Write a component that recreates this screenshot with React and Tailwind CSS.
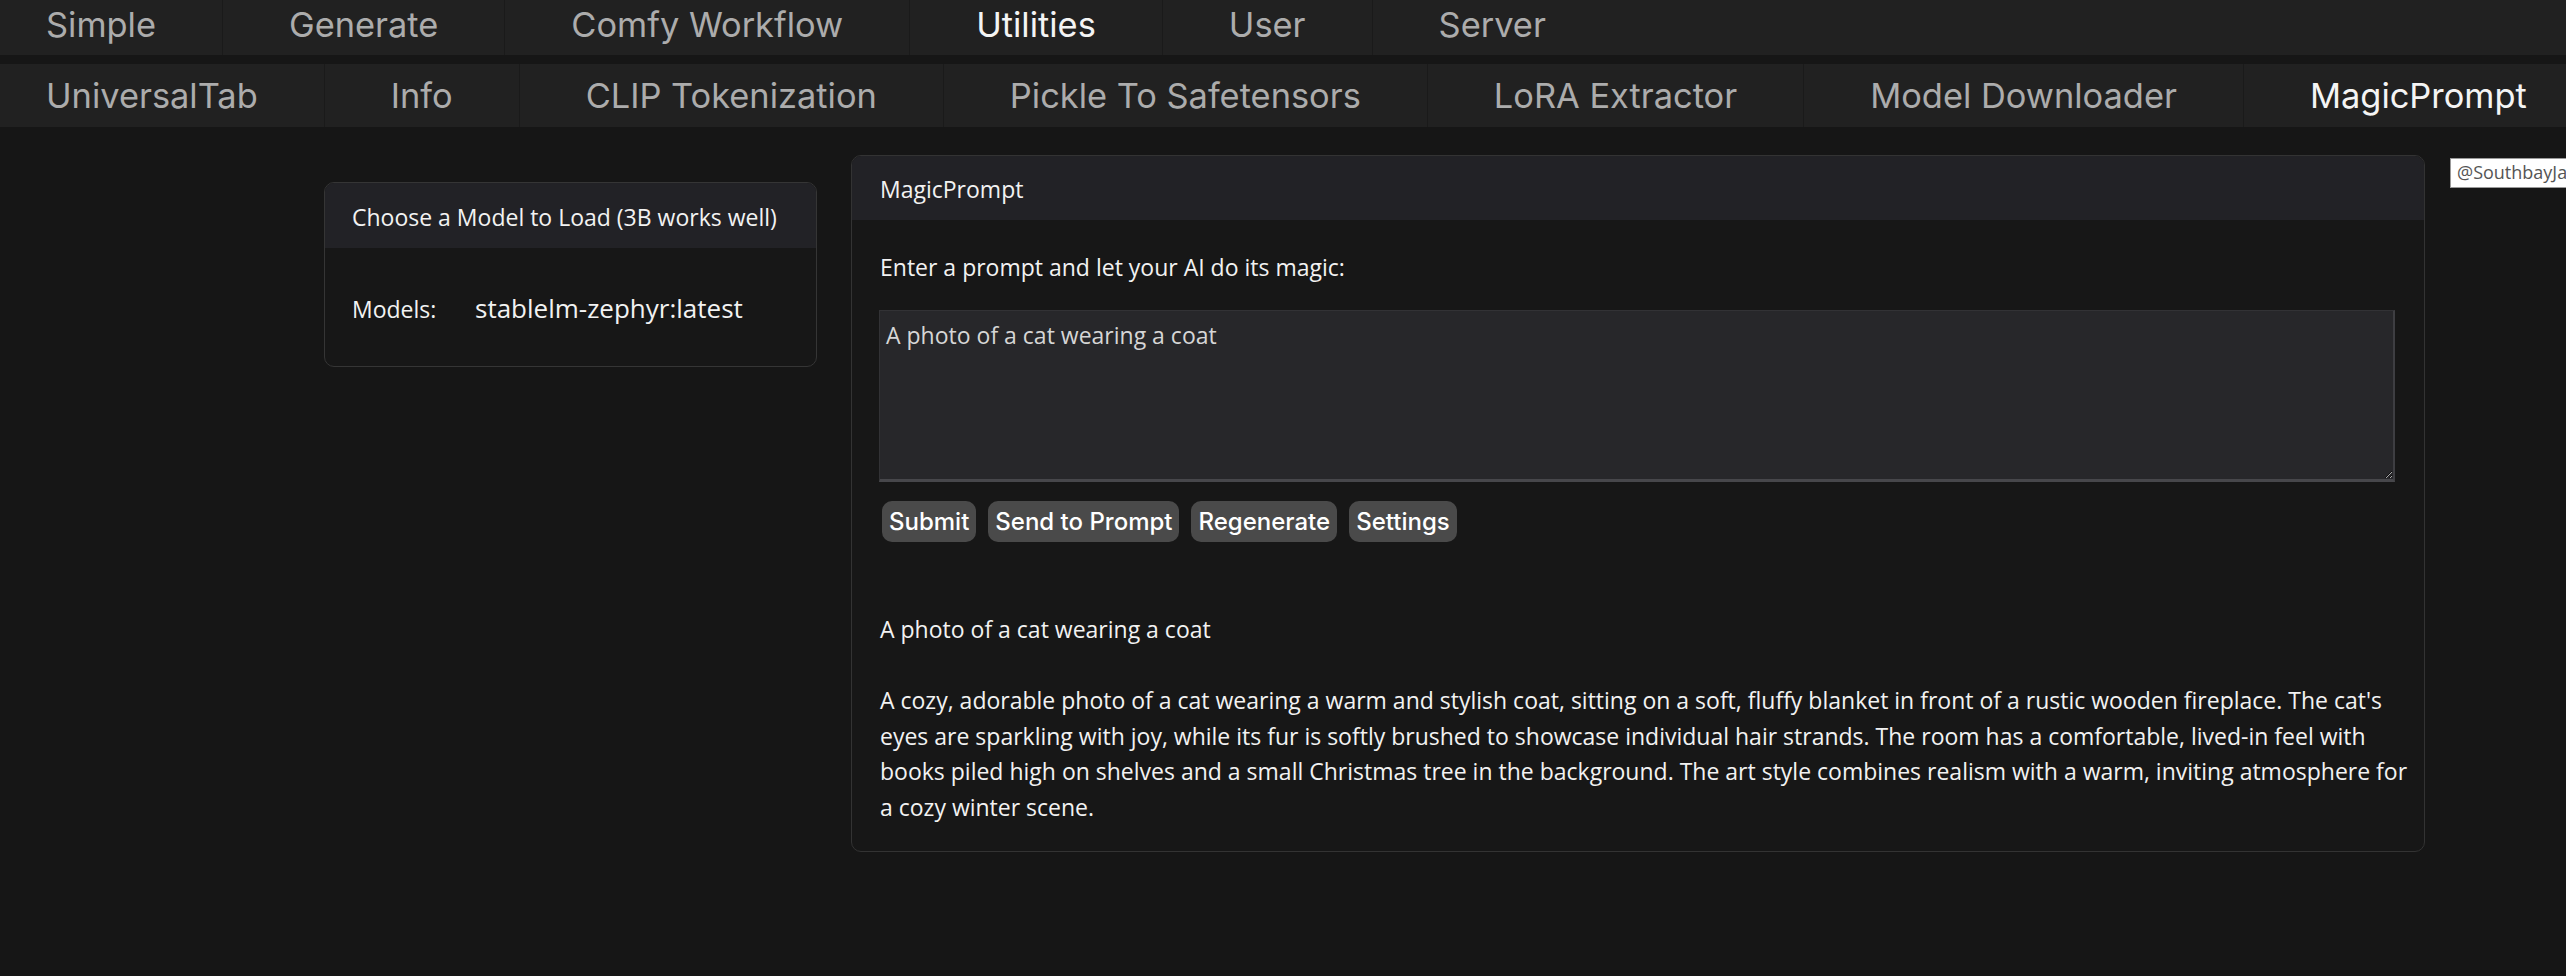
import clsx from "clsx";

const topTabs = [
  { label: "Simple" },
  { label: "Generate" },
  { label: "Comfy Workflow" },
  { label: "Utilities", active: true },
  { label: "User" },
  { label: "Server" },
];

const utilTabs = [
  { label: "UniversalTab" },
  { label: "Info" },
  { label: "CLIP Tokenization" },
  { label: "Pickle To Safetensors" },
  { label: "LoRA Extractor" },
  { label: "Model Downloader" },
  { label: "MagicPrompt", active: true },
];

const answer = [
  "A cozy, adorable photo of a cat wearing a warm and stylish coat, sitting on a soft, fluffy blanket in front of a rustic wooden fireplace. The cat's",
  "eyes are sparkling with joy, while its fur is softly brushed to showcase individual hair strands. The room has a comfortable, lived-in feel with",
  "books piled high on shelves and a small Christmas tree in the background. The art style combines realism with a warm, inviting atmosphere for",
  "a cozy winter scene.",
];

const TabBar = ({ tabs, className, top }) => (
  <div className={clsx("flex bg-[#212121] font-['Inter',sans-serif] text-[34.4px] leading-[40px]", className)}>
    {tabs.map((tab, i) => (
      <div
        key={tab.label}
        className={clsx(
          "shrink-0 whitespace-nowrap pr-[66px]",
          i === 0 ? "pl-[46px]" : "pl-[66px]",
          i < tabs.length - 1 && "border-r border-[#1a1a1a]",
          top,
          tab.active ? "text-[#f4f4f4]" : "text-[#acacac]"
        )}
      >
        {tab.label}
      </div>
    ))}
  </div>
);

const Button = ({ children }) => (
  <button className="h-[41px] rounded-[10px] bg-[#4a4a4a] px-[7px] font-['Inter',sans-serif] text-[24px] font-medium leading-[41px] text-white">
    {children}
  </button>
);

export default function App() {
  return (
    <div className="min-h-screen w-full overflow-hidden bg-[#161616] font-['Open_Sans',sans-serif] text-[#f2f2f2]">
      <TabBar tabs={topTabs} className="h-[55px]" top="pt-[5px]" />
      <TabBar tabs={utilTabs} className="mt-[9px] h-[63px]" top="pt-[12px]" />

      <div className="flex items-start pl-[324px] pt-[28px]">
        {/* model picker */}
        <div className="mt-[27px] w-[493px] shrink-0 overflow-hidden rounded-[10px] border border-[#353535] bg-[#171717]">
          <div className="h-[65px] bg-[#222226] px-[27px] pt-[16px] text-[23px] leading-[36px]">
            Choose a Model to Load (3B works well)
          </div>
          <div className="flex items-baseline px-[27px] pt-[42px] pb-[39px]">
            <span className="w-[123px] text-[23px] leading-[36px]">Models:</span>
            <span className="text-[26px] leading-[36px]">stablelm-zephyr:latest</span>
          </div>
        </div>

        {/* magic prompt */}
        <div className="ml-[34px] w-[1574px] shrink-0 overflow-hidden rounded-[10px] border border-[#333333] bg-[#171717]">
          <div className="h-[64px] bg-[#222226] px-[28px] pt-[15px] text-[23px] leading-[36px]">MagicPrompt</div>
          <div className="px-[28px] pt-[29px] pb-[26px] text-[23px] leading-[36px]">
            <p>Enter a prompt and let your AI do its magic:</p>
            <textarea
              readOnly
              defaultValue="A photo of a cat wearing a coat"
              className="mt-[25px] -ml-px block h-[172px] w-full resize-y border border-r-2 border-b-[3px] border-[#323235] border-r-[#3e3e42] border-b-[#47474b] bg-[#27272a] px-[6px] pt-[6px] text-[23px] leading-[36px] text-[#d6d6d6] outline-none [color-scheme:dark]"
            />
            <div className="mt-[19px] ml-[2px] flex gap-[12px]">
              <Button>Submit</Button>
              <Button>Send to Prompt</Button>
              <Button>Regenerate</Button>
              <Button>Settings</Button>
            </div>
            <div className="mt-[70px] whitespace-nowrap leading-[35.5px]">
              <p>A photo of a cat wearing a coat</p>
              <p className="mt-[35.5px]">
                {answer.map((line, i) => (
                  <span key={i} className="block">
                    {line}
                  </span>
                ))}
              </p>
            </div>
          </div>
        </div>

        <div className="mt-[3px] ml-[25px] h-[30px] shrink-0 whitespace-nowrap border border-[#9a9a9a] bg-white px-[6px] text-[18px] leading-[27px] text-[#555555]">
          @SouthbayJay
        </div>
      </div>
    </div>
  );
}
